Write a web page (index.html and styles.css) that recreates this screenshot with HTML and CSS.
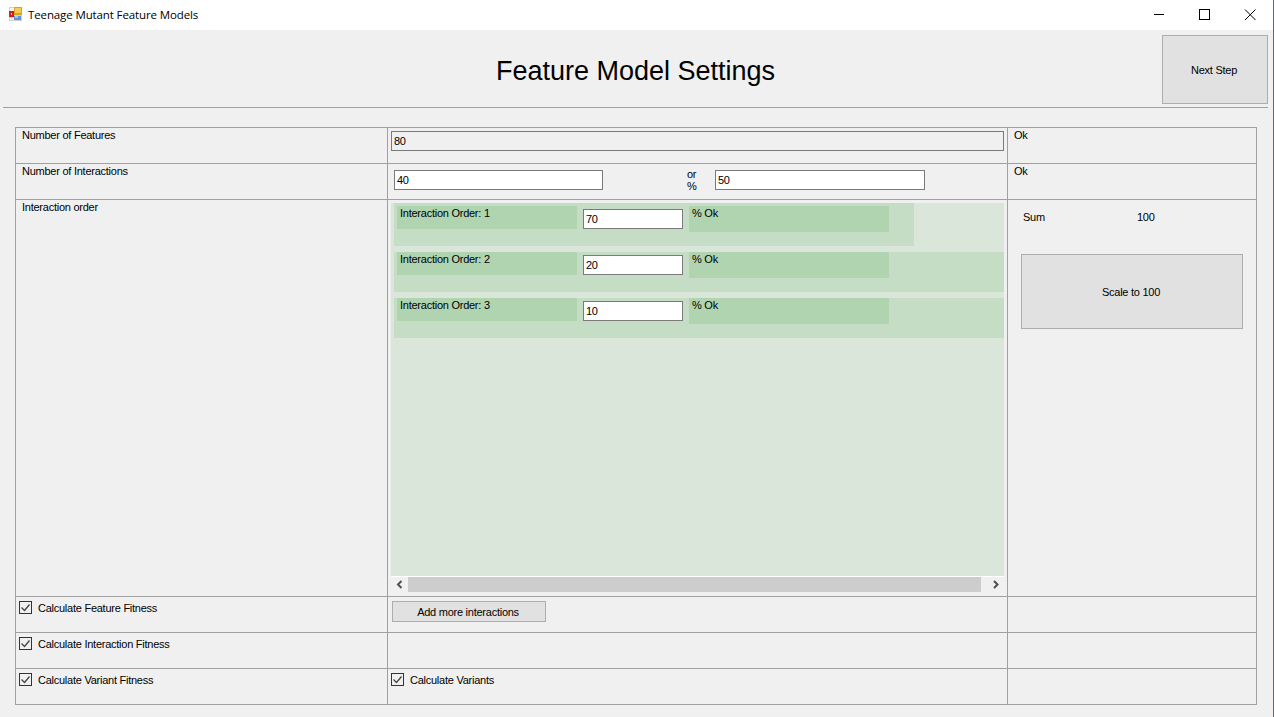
FILE: index.html
```html
<!DOCTYPE html>
<html lang="en">
<head>
  <meta charset="UTF-8">
  <title>Teenage Mutant Feature Models</title>
  <link rel="stylesheet" href="styles.css">
</head>
<body>

  <div class="titlebar">
    <svg class="app-icon" width="14" height="14" viewBox="0 0 14 14">
      <rect x="0" y="0" width="13" height="14" fill="#d0d0d0"/>
      <rect x="1" y="1" width="4" height="3" fill="#f4f4f4"/>
      <rect x="1" y="11" width="4" height="2" fill="#f4f4f4"/>
      <rect x="0" y="4" width="5" height="6" fill="#c8241c"/>
      <rect x="2" y="6" width="1" height="2" fill="#f4d0c0"/>
      <rect x="5" y="0" width="8" height="8" fill="#e0a020"/>
      <rect x="6" y="1" width="6" height="5" fill="#f6cc50"/>
      <rect x="5" y="9" width="7" height="4" fill="#5b93dc"/>
      <rect x="6" y="9" width="3" height="2" fill="#a8c8f0"/>
    </svg>
    <span class="app-name">Teenage Mutant Feature Models</span>
    <div class="window-buttons">
      <svg width="46" height="30" viewBox="0 0 46 30"><path d="M19 14.5h10" stroke="#000" fill="none"/></svg>
      <svg width="46" height="30" viewBox="0 0 46 30"><rect x="18.5" y="9.5" width="10" height="10" stroke="#000" fill="none"/></svg>
      <svg width="46" height="30" viewBox="0 0 46 30"><path d="M18 9.5l10.5 10.5M28.5 9.5L18 20" stroke="#000" fill="none"/></svg>
    </div>
  </div>

  <div class="header">
    <h1>Feature Model Settings</h1>
    <button class="btn next-btn">Next Step</button>
  </div>
  <hr class="separator">

  <div class="settings">
    <!-- row 1 -->
    <div class="cell">Number of Features</div>
    <div class="cell features-cell"><div class="textbox textbox-grey">80</div></div>
    <div class="cell">Ok</div>

    <!-- row 2 -->
    <div class="cell">Number of Interactions</div>
    <div class="cell interactions-cell">
      <div class="textbox count-box">40</div>
      <div class="or-label">or<br>%</div>
      <div class="textbox percent-box">50</div>
    </div>
    <div class="cell">Ok</div>

    <!-- row 3 -->
    <div class="cell">Interaction order</div>
    <div class="cell order-cell">
      <div class="order-panel">
        <div class="order-list">
          <div class="order-row order-row-first">
            <div class="order-label">Interaction Order: 1</div>
            <div class="textbox order-input">70</div>
            <div class="order-status">% Ok</div>
          </div>
          <div class="order-row">
            <div class="order-label">Interaction Order: 2</div>
            <div class="textbox order-input">20</div>
            <div class="order-status">% Ok</div>
          </div>
          <div class="order-row">
            <div class="order-label">Interaction Order: 3</div>
            <div class="textbox order-input">10</div>
            <div class="order-status">% Ok</div>
          </div>
        </div>
      </div>
      <div class="scrollbar">
        <svg width="17" height="15" viewBox="0 0 17 15"><path d="M10.5 4L7 7.5l3.5 3.5" stroke="#505050" stroke-width="2" fill="none"/></svg>
        <div class="scroll-thumb"></div>
        <svg width="17" height="15" viewBox="0 0 17 15"><path d="M7 4l3.5 3.5L7 11" stroke="#505050" stroke-width="2" fill="none"/></svg>
      </div>
    </div>
    <div class="cell sum-cell">
      <div class="sum-row"><span class="sum-label">Sum</span><span>100</span></div>
      <button class="btn scale-btn">Scale to 100</button>
    </div>

    <!-- row 4 -->
    <div class="cell check-cell">
      <span class="checkbox"><svg width="11" height="11" viewBox="0 0 11 11"><path d="M1.5 5.5l3 3 5-6" stroke="#444" stroke-width="1.3" fill="none"/></svg></span>
      Calculate Feature Fitness
    </div>
    <div class="cell add-cell"><button class="btn add-btn">Add more interactions</button></div>
    <div class="cell"></div>

    <!-- row 5 -->
    <div class="cell check-cell">
      <span class="checkbox"><svg width="11" height="11" viewBox="0 0 11 11"><path d="M1.5 5.5l3 3 5-6" stroke="#444" stroke-width="1.3" fill="none"/></svg></span>
      Calculate Interaction Fitness
    </div>
    <div class="cell"></div>
    <div class="cell"></div>

    <!-- row 6 -->
    <div class="cell check-cell">
      <span class="checkbox"><svg width="11" height="11" viewBox="0 0 11 11"><path d="M1.5 5.5l3 3 5-6" stroke="#444" stroke-width="1.3" fill="none"/></svg></span>
      Calculate Variant Fitness
    </div>
    <div class="cell check-cell">
      <span class="checkbox"><svg width="11" height="11" viewBox="0 0 11 11"><path d="M1.5 5.5l3 3 5-6" stroke="#444" stroke-width="1.3" fill="none"/></svg></span>
      Calculate Variants
    </div>
    <div class="cell"></div>
  </div>

</body>
</html>
```

FILE: styles.css
```css
html, body {
  height: 100%;
}

body {
  margin: 0;
  padding: 0;
  overflow: hidden;
  background-color: #f0f0f0;
  border-right: 1px solid #2a7ab0;
  box-sizing: border-box;
  font-family: "Liberation Sans", Arial, sans-serif;
  font-size: 11px;
  letter-spacing: -0.25px;
  color: #000;
}

.titlebar {
  height: 30px;
  background-color: #fff;
  display: flex;
  align-items: center;
  padding-left: 9px;
}

.app-icon {
  margin-bottom: 2px;
}

.app-name {
  margin: 0 0 2px 5px;
  font-family: "Open Sans", sans-serif;
  font-size: 11.5px;
  letter-spacing: -0.12px;
}

.window-buttons {
  margin-left: auto;
  display: flex;
}

.header {
  height: 77px;
  display: grid;
  grid-template-columns: 1fr auto 1fr;
  align-items: start;
  box-sizing: border-box;
  padding-right: 2px;
}

.header h1 {
  grid-column: 2;
  margin: 26px 0 0 0;
  font-size: 27px;
  font-weight: normal;
  letter-spacing: 0;
}

.next-btn {
  grid-column: 3;
  justify-self: end;
  width: 106px;
  height: 69px;
  margin: 5px 3px 0 0;
}

.btn {
  background-color: #e1e1e1;
  border: 1px solid #adadad;
  font-family: inherit;
  font-size: 11px;
  letter-spacing: inherit;
  color: #000;
  padding: 0 2px 0 0;
}

.separator {
  margin: 0 5px 0 3px;
  border: 0;
  height: 1px;
  background-color: #a0a0a0;
}

.settings {
  margin: 19px 0 0 15px;
  width: 1242px;
  display: grid;
  grid-template-columns: 371px 619px 248px;
  grid-template-rows: 35px 35px 396px 35px 35px 35px;
  gap: 1px;
  padding: 1px;
  box-sizing: border-box;
  background-color: #a0a0a0;
}

.cell {
  background-color: #f0f0f0;
  padding: 1px 6px;
  min-width: 0;
}

.textbox {
  background-color: #fff;
  border: 1px solid #7a7a7a;
  height: 20px;
  line-height: 18px;
  box-sizing: border-box;
  padding-left: 2px;
}

.features-cell {
  padding: 3px 3px;
}

.textbox-grey {
  background-color: #f0f0f0;
}

.interactions-cell {
  display: flex;
  padding: 6px 6px;
  align-items: flex-start;
}

.count-box {
  width: 209px;
}

.percent-box {
  width: 210px;
}

.or-label {
  width: 112px;
  padding-left: 84px;
  box-sizing: border-box;
  line-height: 12px;
  margin-top: -2px;
}

.order-cell {
  padding: 3px 3px 0 3px;
  display: flex;
  flex-direction: column;
}

.order-panel {
  flex: 1;
  background-color: #dbe6db;
}

.order-list {
  display: flex;
  flex-direction: column;
  gap: 6px;
  padding-left: 3px;
}

.order-row {
  background-color: #c5dcc5;
  height: 40px;
  padding-left: 3px;
  box-sizing: border-box;
  display: flex;
  align-items: flex-start;
}

.order-row-first {
  width: 520px;
  height: 43px;
  padding-top: 3px;
}

.order-label {
  width: 180px;
  height: 23px;
  background-color: #b0d4b0;
  padding: 1px 3px;
  box-sizing: border-box;
}

.order-input {
  width: 100px;
  margin: 3px 6px 0 6px;
}

.order-status {
  width: 200px;
  height: 26px;
  background-color: #b0d4b0;
  padding: 1px 3px;
  box-sizing: border-box;
}

.scrollbar {
  height: 18px;
  margin-bottom: 2px;
  box-sizing: border-box;
  border-top: 1px solid #fff;
  background-color: #f0f0f0;
  display: flex;
  align-items: flex-start;
}

.scroll-thumb {
  flex: 1;
  height: 15px;
  margin-right: 6px;
  background-color: #cdcdcd;
}

.sum-cell {
  padding: 11px 13px;
}

.sum-row {
  display: flex;
  padding-left: 2px;
}

.sum-label {
  width: 114px;
}

.scale-btn {
  display: block;
  width: 222px;
  height: 75px;
  margin-top: 31px;
}

.check-cell {
  display: flex;
  align-items: flex-start;
  gap: 6px;
  padding: 5px 3px;
}

.checkbox {
  width: 13px;
  height: 13px;
  margin-top: -1px;
  border: 1px solid #333;
  flex: none;
  display: flex;
  align-items: center;
  justify-content: center;
  box-sizing: border-box;
}

.add-cell {
  padding: 4px 4px;
}

.add-btn {
  display: block;
  width: 154px;
  height: 21px;
}
```
